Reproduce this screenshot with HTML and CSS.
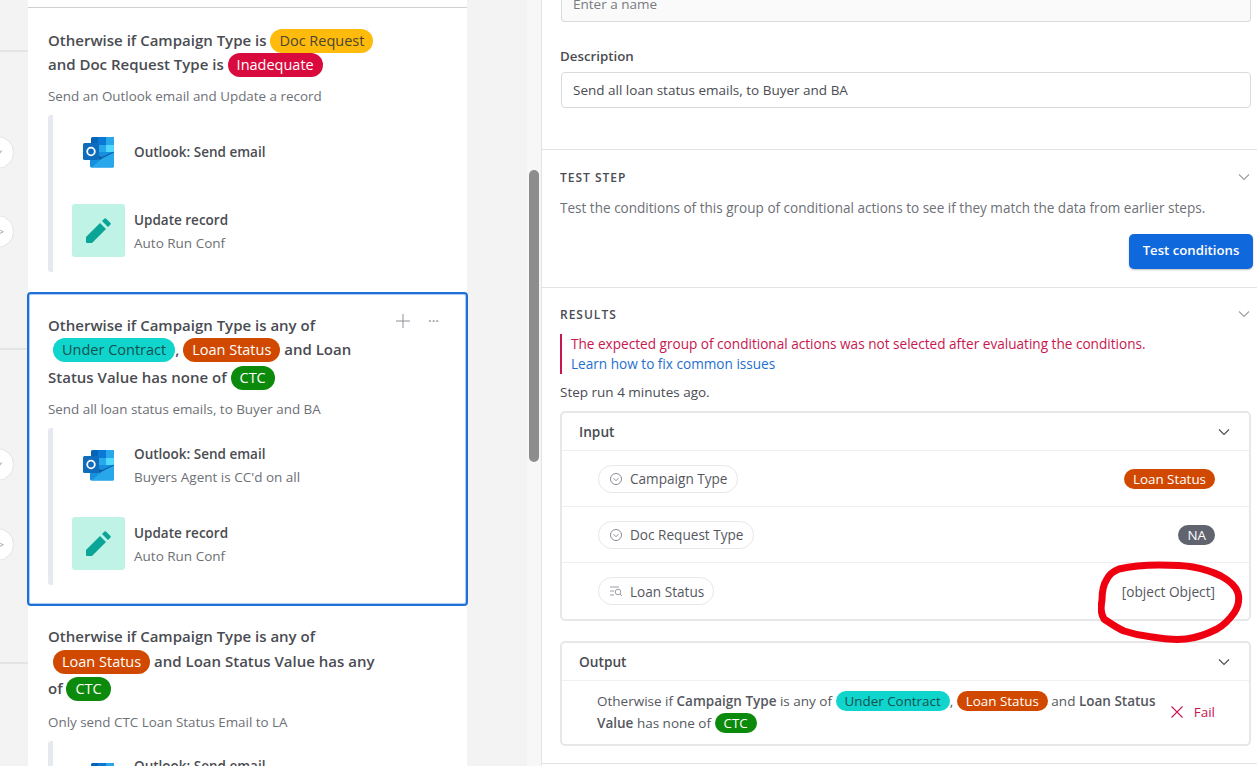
FILE: index.html
```html
<!DOCTYPE html>
<html lang="en">
<head>
<meta charset="utf-8">
<title>Conditional actions</title>
<link rel="stylesheet" href="styles.css">
</head>
<body>
<svg width="0" height="0" class="defs">
  <defs>
    <symbol id="outlook" viewBox="0 0 32 32">
      <rect x="8" y="1" width="23" height="16" rx="1.5" fill="#0364b8"/>
      <rect x="15" y="1" width="8" height="8" fill="#0a78d4"/>
      <rect x="23" y="1" width="8" height="8" fill="#28a8ea"/>
      <rect x="15" y="9" width="8" height="8" fill="#28a8ea"/>
      <rect x="23" y="9" width="8" height="8" fill="#50d9ff"/>
      <rect x="8" y="9" width="7" height="8" fill="#0078d4"/>
      <path d="M7 16h24v14a1.500 1.500 0 0 1-1.500 1.500h-21A1.500 1.500 0 0 1 7 30z" fill="#1490df"/>
      <path d="M31 15.500v2L19 25 7 17.500v-1l12 4.500z" fill="#0f5fa8"/>
      <path d="M19 22.500l12-6V30a1.500 1.500 0 0 1-1.500 1.500H8.500z" fill="#28a8ea"/>
      <rect x="0" y="7" width="16" height="17" rx="1.500" fill="#0f6cbd"/>
      <circle cx="8" cy="15.500" r="3.800" fill="none" stroke="#fff" stroke-width="1.800"/>
    </symbol>
    <symbol id="pencil" viewBox="0 0 28 28">
      <path d="M1 20L15 6l6 6L7 26H2a1 1 0 0 1-1-1z" fill="#0aa596"/>
      <path d="M17 4l2.500-2.500a1 1 0 0 1 1.400 0L25.500 6a1 1 0 0 1 0 1.400L23 10z" fill="#0aa596"/>
    </symbol>
    <symbol id="chev" viewBox="0 0 12 8">
      <path d="M1 1.500l5 5 5-5" fill="none" stroke="currentColor" stroke-width="1.100"/>
    </symbol>
    <symbol id="circle-check" viewBox="0 0 14 14">
      <circle cx="7" cy="7" r="5.500" fill="none" stroke="#8b8f96" stroke-width="1"/>
      <path d="M4.500 6.200L7 8.700l2.500-2.500" fill="none" stroke="#8b8f96" stroke-width="1"/>
    </symbol>
    <symbol id="lookup" viewBox="0 0 14 14">
      <path d="M1 3h9M1 7h4M1 11h4" fill="none" stroke="#9a9ea5" stroke-width="1"/>
      <circle cx="9" cy="8" r="2.800" fill="none" stroke="#9a9ea5" stroke-width="1"/>
      <path d="M11 10l2 2" stroke="#9a9ea5" stroke-width="1"/>
    </symbol>
  </defs>
</svg>

<div class="app">
  <section class="canvas">
    <span class="rail-line rail-line-a"></span>
    <span class="rail-line rail-line-b"></span>
    <span class="rail-line rail-line-c"></span>
    <span class="rail-node rail-node-a">✓</span>
    <span class="rail-node rail-node-b">&gt;</span>
    <span class="rail-node rail-node-c">✓</span>
    <span class="rail-node rail-node-d">&gt;</span>

    <div class="stack">
      <div class="stack-top"></div>

      <article class="card">
        <h3 class="cond">
          <span class="line">Otherwise if Campaign Type is <span class="chip chip-amber">Doc Request</span></span>
          <span class="line">and Doc Request Type is <span class="chip chip-crimson">Inadequate</span></span>
        </h3>
        <p class="desc">Send an Outlook email and Update a record</p>
        <div class="actions">
          <div class="action">
            <div class="action-icon"><svg class="ol"><use href="#outlook"/></svg></div>
            <div class="action-text"><b>Outlook: Send email</b></div>
          </div>
          <div class="action">
            <div class="action-icon action-icon-teal"><svg class="pen"><use href="#pencil"/></svg></div>
            <div class="action-text action-text-two"><b>Update record</b><span>Auto Run Conf</span></div>
          </div>
        </div>
      </article>

      <article class="card card-selected">
        <div class="card-tools">
          <svg class="plus" viewBox="0 0 14 14"><path d="M7 0v14M0 7h14" stroke="#8e9197" stroke-width="1" fill="none"/></svg>
          <span class="dots">···</span>
        </div>
        <h3 class="cond">
          <span class="line">Otherwise if Campaign Type is any of</span>
          <span class="line"><span class="chip chip-teal chip-first">Under Contract</span>, <span class="chip chip-orange">Loan Status</span> and Loan</span>
          <span class="line line-gap4">Status Value has none of <span class="chip chip-green">CTC</span></span>
        </h3>
        <p class="desc">Send all loan status emails, to Buyer and BA</p>
        <div class="actions">
          <div class="action">
            <div class="action-icon"><svg class="ol"><use href="#outlook"/></svg></div>
            <div class="action-text action-text-two"><b>Outlook: Send email</b><span>Buyers Agent is CC'd on all</span></div>
          </div>
          <div class="action">
            <div class="action-icon action-icon-teal"><svg class="pen"><use href="#pencil"/></svg></div>
            <div class="action-text action-text-two"><b>Update record</b><span>Auto Run Conf</span></div>
          </div>
        </div>
      </article>

      <article class="card card-last">
        <h3 class="cond">
          <span class="line">Otherwise if Campaign Type is any of</span>
          <span class="line line-gap1"><span class="chip chip-orange chip-first">Loan Status</span> and Loan Status Value has any</span>
          <span class="line line-gap3">of <span class="chip chip-green">CTC</span></span>
        </h3>
        <p class="desc">Only send CTC Loan Status Email to LA</p>
        <div class="actions">
          <div class="action">
            <div class="action-icon"><svg class="ol"><use href="#outlook"/></svg></div>
            <div class="action-text"><b>Outlook: Send email</b><span>&nbsp;</span></div>
          </div>
        </div>
      </article>
    </div>
  </section>

  <div class="scrollbar"><div class="thumb"></div></div>

  <aside class="panel">
    <div class="section section-form">
      <div class="input input-name">Enter a name</div>
      <label class="label">Description</label>
      <div class="input">Send all loan status emails, to Buyer and BA</div>
    </div>

    <div class="section section-test">
      <div class="section-head"><h4>TEST STEP</h4><svg class="chev chev-light"><use href="#chev"/></svg></div>
      <p class="muted">Test the conditions of this group of conditional actions to see if they match the data from earlier steps.</p>
      <div class="btn-row"><button class="btn">Test conditions</button></div>
    </div>

    <div class="section section-results">
      <div class="section-head"><h4>RESULTS</h4><svg class="chev chev-light"><use href="#chev"/></svg></div>
      <div class="error">
        <div>The expected group of conditional actions was not selected after evaluating the conditions.</div>
        <a class="link">Learn how to fix common issues</a>
      </div>
      <p class="step-run">Step run 4 minutes ago.</p>

      <div class="box">
        <div class="box-head"><span>Input</span><svg class="chev"><use href="#chev"/></svg></div>
        <div class="box-row">
          <span class="field"><svg class="field-icon"><use href="#circle-check"/></svg>Campaign Type</span>
          <span class="chip chip-orange chip-sm">Loan Status</span>
        </div>
        <div class="box-row">
          <span class="field"><svg class="field-icon"><use href="#circle-check"/></svg>Doc Request Type</span>
          <span class="chip chip-gray chip-sm">NA</span>
        </div>
        <div class="box-row">
          <span class="field"><svg class="field-icon"><use href="#lookup"/></svg>Loan Status</span>
          <span class="value">[object Object]</span>
        </div>
      </div>

      <div class="box box-output">
        <div class="box-head"><span>Output</span><svg class="chev"><use href="#chev"/></svg></div>
        <div class="output-row">
          <p class="output-text">Otherwise if <b>Campaign Type</b> is any of <span class="chip chip-teal chip-sm">Under Contract</span>, <span class="chip chip-orange chip-sm">Loan Status</span> and <b>Loan Status Value</b> has none of <span class="chip chip-green chip-sm">CTC</span></p>
          <span class="fail"><svg class="fail-x" viewBox="0 0 12 12"><path d="M.5.500l11 11M11.500.500l-11 11" stroke="#c8174f" stroke-width="1.100" fill="none"/></svg>Fail</span>
        </div>
      </div>
    </div>

    <svg class="scribble" viewBox="0 0 146 84" aria-hidden="true">
      <path d="M6 59C2 52 3 46 4 40C4 31 5 25 9 19C12 13 16 11 21 9C34 6 48 5 61 5C73 5 84 5 95 7C106 9 115 12 123 16C132 21 138 26 140 33C142 41 140 47 136 53C131 60 126 65 119 69C109 74 99 78 88 79C77 80 65 79 54 77C44 76 35 74 26 71C19 68 12 63 6 59z" fill="none" stroke="#ee0010" stroke-width="7" stroke-linejoin="round"/>
    </svg>
  </aside>
</div>
</body>
</html>
```

FILE: styles.css
```css
* { box-sizing: border-box; }
html, body { margin: 0; height: 100%; overflow: hidden; }
body {
  font-family: "Open Sans", "Noto Sans", "Liberation Sans", sans-serif;
  color: #4a4c52;
  background: #fff;
}
.defs { position: absolute; }
.app { display: flex; width: 1257px; height: 766px; overflow: hidden; }

/* left canvas */
.canvas { position: relative; width: 527px; height: 766px; background: #f3f3f4; overflow: hidden; flex: none; }
.stack { width: 439px; margin-left: 28px; }
.stack-top { height: 8px; background: #fff; border-bottom: 1px solid #cfd0d3; }
.card { position: relative; background: #fff; padding: 20px 20px 0; height: 284px; }
.card-last { padding-top: 18px; height: 200px; }
.card-last .desc { margin-top: 12px; }
.card-selected {
  height: 314px;
  margin: 0 -1px;
  padding: 19px 19px 0;
  border: 2px solid #1f6fd6;
  border-radius: 4px;
  box-shadow: inset 0 0 0 1px #a9cdf6;
}
.cond { margin: 0; font-size: 15px; font-weight: 600; line-height: 24px; color: #4a4c52; }
.line { display: block; height: 24px; white-space: nowrap; }
.line-gap1 { margin-top: 1px; }
.line-gap3 { margin-top: 3px; }
.line-gap4 { margin-top: 4px; }
.chip {
  display: inline-block;
  font-size: 14.500px;
  font-weight: 400;
  line-height: 24px;
  height: 24px;
  padding: 0 9px;
  border-radius: 12px;
  vertical-align: baseline;
}
.chip-first { margin-left: 5px; }
.chip-amber { background: #ffbb0b; color: #4a4433; }
.chip-crimson { background: #d80a3e; color: #fff; }
.chip-teal { background: #0fd5cd; color: #13504e; }
.chip-orange { background: #d14900; color: #fff; }
.chip-green { background: #0b8a0b; color: #fff; }
.chip-gray { background: #60646f; color: #fff; }
.chip-sm { font-size: 13.400px; height: 20px; line-height: 20px; border-radius: 10px; }
.desc { margin: 10px 0 0; font-size: 13.400px; line-height: 20px; color: #6d7076; white-space: nowrap; }
.actions {
  margin-top: 9px;
  border-left: 5px solid #e7e9f0;
  border-radius: 3px;
  padding: 10px 0 0 19px;
  height: 157px;
  display: flex;
  flex-direction: column;
  gap: 26px;
}
.action { display: flex; align-items: center; gap: 9px; height: 53px; flex: none; }
.action-icon { width: 53px; height: 53px; display: flex; align-items: center; justify-content: center; flex: none; border-radius: 3px; }
.action-icon-teal { background: #bff3e6; }
.ol { width: 32px; height: 32px; }
.pen { width: 28px; height: 28px; }
.action-text { display: flex; flex-direction: column; gap: 3px; font-size: 13.500px; line-height: 20px; white-space: nowrap; }
.action-text-two { padding-top: 2px; }
.action-text b { font-weight: 600; }
.action-text span { color: #6d7076; }
.card-tools { position: absolute; top: 20px; right: 27px; display: flex; align-items: center; gap: 18px; }
.plus { width: 14px; height: 14px; }
.dots { font-size: 14px; line-height: 14px; color: #8e9197; }

/* rail decoration */
.rail-line { position: absolute; left: 0; width: 28px; height: 2px; background: #e3e4e6; }
.rail-line-a { top: 50px; }
.rail-line-b { top: 348px; }
.rail-line-c { top: 662px; }
.rail-node {
  position: absolute; left: -19px; width: 33px; height: 33px;
  border-radius: 50%; background: #fff; border: 1px solid #e3e4e6;
  display: flex; align-items: center; justify-content: flex-end; padding-right: 9px;
  font-size: 9px; color: #8e9197; overflow: hidden;
}
.rail-node-a { top: 136px; }
.rail-node-b { top: 215px; }
.rail-node-c { top: 448px; }
.rail-node-d { top: 528px; }

.scrollbar { width: 14px; height: 766px; background: #f7f7f8; flex: none; padding: 170px 2px 0; }
.thumb { width: 10px; height: 292px; background: #8d8d8d; border-radius: 5px; }

/* right panel */
.panel { position: relative; flex: 1; min-width: 0; border-left: 1px solid #e2e3e5; height: 766px; overflow: hidden; }
.section { border-bottom: 1px solid #e2e3e5; padding-left: 18px; padding-right: 4px; }
.section-form { height: 150px; }
.section-test { height: 138px; padding-top: 18px; }
.section-results { height: 476px; padding-top: 17px; }
.input {
  height: 36px; margin-left: 1px; margin-right: 2px;
  border: 1px solid #d9dade; border-radius: 4px;
  padding: 0 11px; font-size: 13.500px; line-height: 35px; color: #4a4c52;
}
.input-name { height: 22px; border-top: 0; border-radius: 0 0 4px 4px; background: #fafafa; color: #777a80; line-height: 9px; }
.label { display: block; margin: 24px 0 6px; font-size: 13.300px; font-weight: 600; line-height: 20px; color: #4a4c52; }
.section-head { display: flex; align-items: center; justify-content: space-between; height: 18px; }
.section-head h4 { margin: 0; font-size: 12px; font-weight: 600; letter-spacing: 1px; color: #4a4c52; }
.chev { width: 12px; height: 8px; color: #4a4c52; flex: none; }
.chev-light { color: #9a9da3; margin-right: 3px; }
.muted { margin: 12px 0 0; font-size: 13.550px; line-height: 20px; color: #6d7076; white-space: nowrap; }
.btn-row { display: flex; justify-content: flex-end; margin-top: 16px; }
.btn {
  width: 124px; height: 35px; border: 0; border-radius: 5px; background: #1068dd; color: #fff;
  padding: 0 0 3px;
  font-family: inherit; font-size: 13.200px; font-weight: 600; box-shadow: 0 1px 2px rgba(0,0,0,.25);
}
.error { margin-top: 11px; border-left: 2px solid #c8174f; padding-left: 9px; font-size: 13.600px; line-height: 20px; color: #c8174f; white-space: nowrap; }
.link { color: #1f6fd0; }
.step-run { margin: 8px 0 9px; font-size: 13.500px; line-height: 20px; color: #4a4c52; }
.box { margin-right: 2px; border: 2px solid #e6e7e9; border-radius: 5px; }
.box-output { margin-top: 20px; }
.box-head { display: flex; align-items: center; justify-content: space-between; height: 38px; padding: 0 19px 0 17px; font-size: 13.700px; font-weight: 600; border-bottom: 1px solid #eeeff0; }
.box-row { display: flex; align-items: center; justify-content: space-between; height: 56px; padding: 0 34px 0 36px; border-bottom: 1px solid #eeeff0; }
.box-row:last-child { border-bottom: 0; }
.field { display: inline-flex; align-items: center; gap: 7px; height: 28px; padding: 0 9px 0 10px; border: 1px solid #e6e7e9; border-radius: 14px; font-size: 13.600px; color: #55585e; white-space: nowrap; }
.field-icon { width: 14px; height: 14px; }
.value { font-size: 13.700px; color: #55585e; }
.output-row { display: flex; align-items: center; justify-content: space-between; padding: 9px 34px 10px 35px; gap: 12px; }
.output-text { margin: 0; font-size: 13.500px; line-height: 22px; color: #55585e; }
.output-text b { font-weight: 600; }
.fail { display: inline-flex; align-items: center; gap: 11px; font-size: 13.500px; color: #c8174f; white-space: nowrap; flex: none; }
.fail-x { width: 12px; height: 12px; }
.scribble { position: absolute; left: 556px; top: 560px; width: 146px; height: 84px; pointer-events: none; }
```
